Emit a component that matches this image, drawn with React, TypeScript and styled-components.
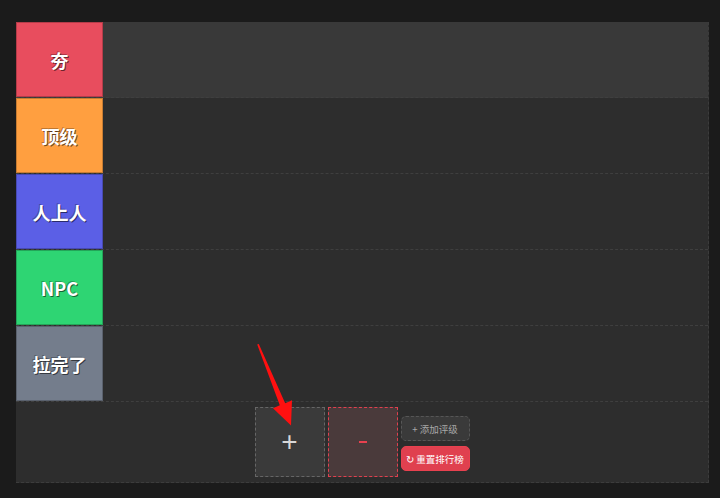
import styled, { createGlobalStyle } from 'styled-components';

const GlobalStyle = createGlobalStyle`
  html, body {
    margin: 0;
    padding: 0;
    background: #1b1b1b;
    font-family: "Noto Sans CJK SC", "Noto Sans", sans-serif;
  }
`;

const Page = styled.div`
  padding: 22px 11px 16px 16px;
`;

const Board = styled.div`
  background: #2d2d2d;
  border-right: 1px dashed #3c3c3c;
  border-bottom: 1px dashed #3c3c3c;
  display: flex;
  flex-direction: column;
`;

const Row = styled.div<{ $active?: boolean }>`
  display: flex;
  height: 76px;
  box-sizing: border-box;
  border-bottom: 1px dashed #3f3f3f;
  background: ${({ $active }) => ($active ? '#393939' : '#2d2d2d')};
`;

const Label = styled.div<{ $color: string }>`
  width: 87px;
  flex-shrink: 0;
  box-sizing: border-box;
  background: ${({ $color }) => $color};
  border: 1px solid rgba(0, 0, 0, 0.22);
  display: flex;
  align-items: center;
  justify-content: center;
  color: #fff;
  font-size: 18px;
  font-weight: 700;
  text-shadow: 1px 1px 0 rgba(0, 0, 0, 0.55), -1px -1px 0 rgba(0, 0, 0, 0.25);
`;

const Items = styled.div`
  flex: 1;
`;

const Footer = styled.div`
  height: 80px;
  display: flex;
  justify-content: center;
  align-items: center;
  gap: 3px;
`;

const DropBox = styled.div<{ $danger?: boolean }>`
  width: 70px;
  height: 70px;
  box-sizing: border-box;
  border: 1px dashed ${({ $danger }) => ($danger ? '#e0404f' : '#666')};
  background: ${({ $danger }) => ($danger ? '#4a3a3b' : '#3a3a3a')};
  color: ${({ $danger }) => ($danger ? '#e8414f' : '#d8d8d8')};
  display: flex;
  align-items: center;
  justify-content: center;
  font-family: "Liberation Sans", sans-serif;
  font-size: 28px;
`;

const MinusBar = styled.span`
  width: 8px;
  height: 2px;
  background: #e8414f;
`;

const ButtonColumn = styled.div`
  display: flex;
  flex-direction: column;
  gap: 5px;
  margin-top: 3px;
`;

const ActionButton = styled.button<{ $primary?: boolean }>`
  width: 69px;
  height: 25px;
  box-sizing: border-box;
  border-radius: 5px;
  border: ${({ $primary }) => ($primary ? '1px solid #e8414f' : '1px dashed #565656')};
  background: ${({ $primary }) => ($primary ? '#e0404f' : '#3a3a3a')};
  color: ${({ $primary }) => ($primary ? '#fff' : '#a8a8a8')};
  font-family: "Noto Sans CJK SC", sans-serif;
  font-size: 9.5px;
  padding: 0;
  display: flex;
  align-items: center;
  justify-content: center;
  gap: 3px;
`;

const Overlay = styled.svg`
  position: fixed;
  left: 0;
  top: 0;
  width: 720px;
  height: 498px;
  pointer-events: none;
`;

const tiers = [
  { name: '夯', color: '#e84d5e' },
  { name: '顶级', color: '#ff9f40' },
  { name: '人上人', color: '#5b5fe6' },
  { name: 'NPC', color: '#2ed573' },
  { name: '拉完了', color: '#747d8c' },
];

export default function App() {
  return (
    <>
      <GlobalStyle />
      <Page>
        <Board>
          {tiers.map((t, i) => (
            <Row key={t.name} $active={i === 0}>
              <Label $color={t.color}>{t.name}</Label>
              <Items />
            </Row>
          ))}
          <Footer>
            <DropBox>+</DropBox>
            <DropBox $danger aria-label="-">
              <MinusBar />
            </DropBox>
            <ButtonColumn>
              <ActionButton>+ 添加评级</ActionButton>
              <ActionButton $primary>↻ 重置排行榜</ActionButton>
            </ButtonColumn>
          </Footer>
        </Board>
      </Page>
      <Overlay viewBox="0 0 720 498">
        <polygon
          fill="#ff1010"
          points="258.8,344 285.2,403.2 292,400.2 291,425.5 273,408.2 279.8,405.2 257.2,344.5"
        />
      </Overlay>
    </>
  );
}
